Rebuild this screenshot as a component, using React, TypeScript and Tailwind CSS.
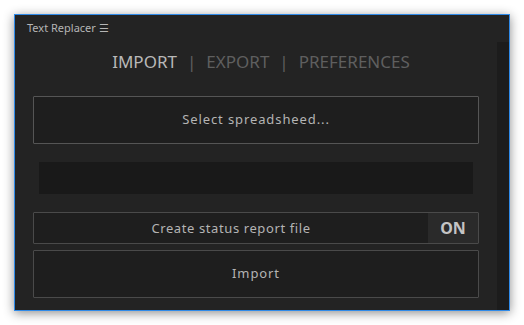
import React from "react";

export default function App() {
  const font = { fontFamily: '"Noto Sans", "Open Sans", sans-serif' };
  return (
    <div className="w-[524px] h-[325px] bg-white overflow-hidden" style={font}>
      <div className="ml-[14px] mt-[14px] w-[496px] h-[297px] border border-[#2f8ae8] bg-[#232323] flex shadow-[0_2px_10px_rgba(0,0,0,0.45)]">
        <div className="flex-1 flex flex-col px-[18px]">
          <div className="h-[27px] pt-[7px] -ml-[6px] text-[11px] leading-[12px] text-[#b5b5b5]">
            <span>Text Replacer ☰</span>
          </div>
          <div className="h-[54px] flex items-start justify-center pt-[11px] pl-[10px] text-[17px] leading-none text-[#5f5f5f]">
            <span className="text-[#b8b8b8]">IMPORT</span>
            <span className="mx-[10px]">|</span>
            <span>EXPORT</span>
            <span className="mx-[10px]">|</span>
            <span>PREFERENCES</span>
          </div>
          <button className="h-[48px] w-full border border-[#555555] rounded-[1px] bg-[#1e1e1e] text-[13px] text-[#b4b4b4] tracking-[0.9px]">
            Select spreadsheed...
          </button>
          <div className="mt-[18px] mx-[6px] h-[32px] bg-[#191919]" />
          <div className="mt-[18px] h-[32px] flex border border-[#4a4a4a] rounded-[1px] bg-[#1e1e1e]">
            <div className="flex-1 flex items-center justify-center pt-[1px] text-[13px] text-[#b4b4b4] tracking-[0.6px]">
              Create status report file
            </div>
            <div className="w-[50px] flex items-center justify-center bg-[#2a2a2a] text-[16px] font-bold text-[#c4c4c4]">
              ON
            </div>
          </div>
          <button className="mt-[6px] h-[48px] w-full border border-[#4a4a4a] rounded-[1px] bg-[#1e1e1e] text-[13px] text-[#b4b4b4] tracking-[0.9px]">
            Import
          </button>
        </div>
        <div className="w-[12px] mt-[27px] bg-[#1c1c1c]" />
      </div>
    </div>
  );
}
